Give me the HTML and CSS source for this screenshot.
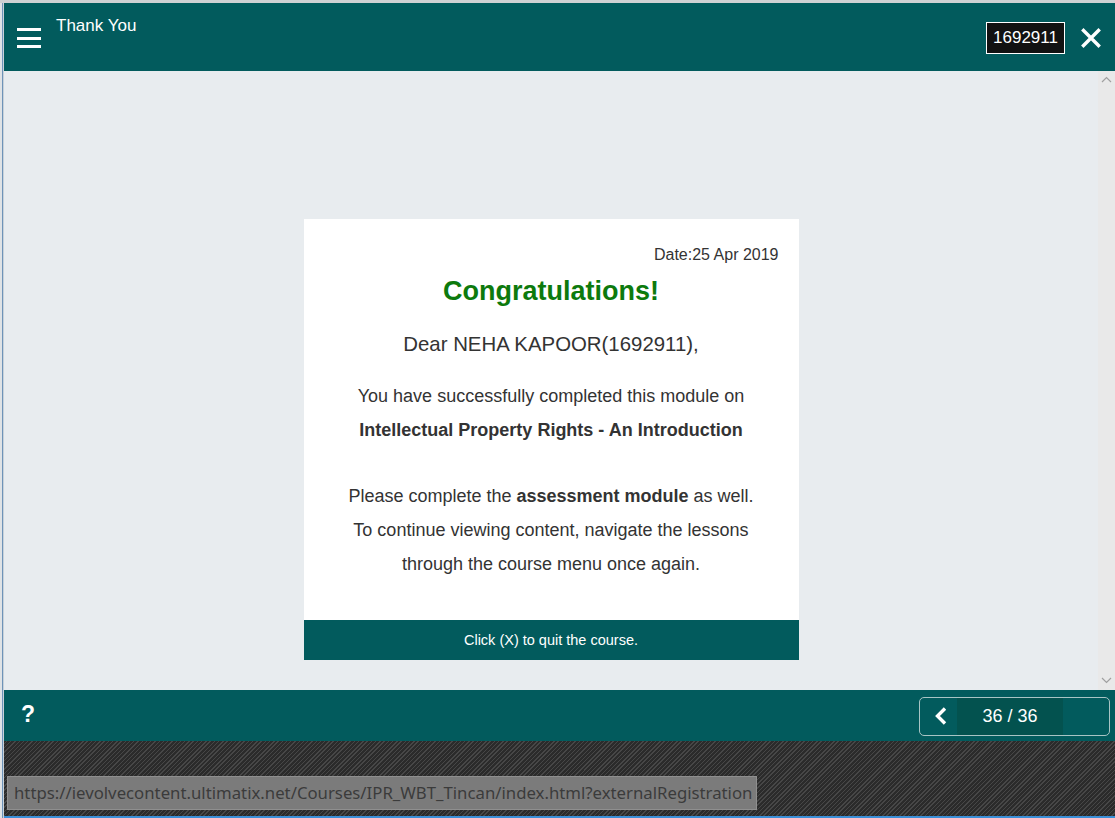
FILE: index.html
```html
<!DOCTYPE html>
<html>
<head>
<meta charset="utf-8">
<link rel="stylesheet" href="styles.css">
</head>
<body>
<div class="topline"></div>
<div class="frame">
  <div class="edge"></div>
  <div class="app">
    <header class="header">
      <div class="header-left">
        <button class="menu" aria-label="menu">
          <span></span><span></span><span></span>
        </button>
        <div class="title">Thank You</div>
      </div>
      <div class="header-right">
        <div class="userid">1692911</div>
        <svg class="close" width="20" height="20" viewBox="0 0 20 20">
          <path d="M2.5 2.5 L17.5 17.5 M17.5 2.5 L2.5 17.5" stroke="#fff" stroke-width="3.4" stroke-linecap="square"/>
        </svg>
      </div>
    </header>
    <main class="content">
      <div class="stage">
        <div class="card">
          <div class="card-body">
            <div class="date">Date:25 Apr 2019</div>
            <h1 class="congrats">Congratulations!</h1>
            <p class="dear">Dear NEHA KAPOOR(1692911),</p>
            <p class="msg">You have successfully completed this module on<br><b>Intellectual Property Rights - An Introduction</b></p>
            <p class="msg second">Please complete the <b>assessment module</b> as well.<br>To continue viewing content, navigate the lessons<br>through the course menu once again.</p>
          </div>
          <div class="card-foot">Click (X) to quit the course.</div>
        </div>
      </div>
      <div class="scrollbar">
        <svg width="11" height="7" viewBox="0 0 11 7"><path d="M1 6 L5.5 1.5 L10 6" fill="none" stroke="#a0a0a0" stroke-width="1.2"/></svg>
        <svg width="11" height="7" viewBox="0 0 11 7"><path d="M1 1 L5.5 5.5 L10 1" fill="none" stroke="#a0a0a0" stroke-width="1.2"/></svg>
      </div>
    </main>
    <footer class="footer">
      <div class="help">?</div>
      <div class="pager">
        <div class="pager-prev">
          <svg width="14" height="20" viewBox="0 0 14 20"><path d="M11 2.5 L3.5 10 L11 17.5" fill="none" stroke="#fff" stroke-width="3.4" stroke-linejoin="miter"/></svg>
        </div>
        <div class="pager-count">36 / 36</div>
        <div class="pager-next"></div>
      </div>
    </footer>
    <div class="backdrop">
      <div class="status">https://ievolvecontent.ultimatix.net/Courses/IPR_WBT_Tincan/index.html?externalRegistration</div>
    </div>
  </div>
</div>
</body>
</html>
```

FILE: styles.css
```css
* { box-sizing: border-box; }
html, body {
  margin: 0;
  padding: 0;
  width: 1115px;
  height: 818px;
  overflow: hidden;
  font-family: "Liberation Sans", Arial, sans-serif;
  background: #e8ecef;
}
.topline {
  height: 3px;
  background: #cfd1d3;
}
.frame {
  display: flex;
  height: 815px;
}
.edge {
  width: 4px;
  flex: none;
  background: linear-gradient(to right, #dfe3e6 0, #dfe3e6 2px, #6e93b8 2px, #6e93b8 3px, #c9d2d9 3px);
}
.app {
  flex: 1;
  display: flex;
  flex-direction: column;
}
.header {
  height: 68px;
  flex: none;
  background: #025b5d;
  display: flex;
  justify-content: space-between;
  align-items: flex-start;
}
.header-left {
  display: flex;
  align-items: flex-start;
}
.menu {
  margin: 23px 0 0 13px;
  border: 0;
  background: none;
  width: 24px;
  height: 24px;
  display: flex;
  flex-direction: column;
  justify-content: space-between;
  padding: 2px 0;
}
.menu span {
  display: block;
  height: 3px;
  background: #fff;
  width: 24px;
}
.title {
  color: #fff;
  font-size: 17px;
  margin: 13px 0 0 15px;
}
.header-right {
  display: flex;
  align-items: center;
  margin-top: 19px;
}
.userid {
  background: #121212;
  border: 1px solid #fff;
  color: #fff;
  font-size: 17px;
  height: 32px;
  line-height: 30px;
  padding: 0 4px;
  width: 79px;
  text-align: center;
}
.close {
  margin: 0 14px 0 16px;
}
.content {
  height: 619px;
  flex: none;
  display: flex;
  background: #e8ecef;
}
.stage {
  flex: 1;
  display: flex;
  justify-content: center;
  padding-top: 148px;
}
.card {
  width: 495px;
  height: 441px;
  display: flex;
  flex-direction: column;
  background: #fff;
}
.card-body {
  flex: 1;
  padding: 26px 20px 0;
  text-align: center;
  color: #333;
}
.date {
  text-align: right;
  font-size: 16px;
  line-height: 20px;
}
.congrats {
  margin: 9px 0 0;
  color: #0d7a0d;
  font-size: 27px;
  font-weight: bold;
  line-height: 34px;
}
.dear {
  margin: 19px 0 0;
  font-size: 20.4px;
  line-height: 34px;
}
.msg {
  margin: 18px 0 0;
  font-size: 18px;
  line-height: 34px;
}
.msg.second {
  margin-top: 32px;
}
.card-foot {
  height: 40px;
  flex: none;
  background: #025b5d;
  color: #fff;
  font-size: 14.5px;
  display: flex;
  align-items: center;
  justify-content: center;
}
.scrollbar {
  width: 17px;
  flex: none;
  background: #e9e9e9;
  display: flex;
  flex-direction: column;
  justify-content: space-between;
  align-items: center;
  padding: 5px 0 6px;
}
.footer {
  height: 51px;
  flex: none;
  background: #025b5d;
  display: flex;
  justify-content: space-between;
  align-items: center;
}
.help {
  color: #fff;
  font-size: 23px;
  font-weight: bold;
  margin-left: 17px;
  margin-top: -2px;
}
.pager {
  display: flex;
  height: 39px;
  width: 191px;
  border: 1px solid #a8c4c4;
  border-radius: 5px;
  margin-right: 5px;
  margin-top: 1px;
  overflow: hidden;
}
.pager-prev {
  width: 37px;
  display: flex;
  align-items: center;
  justify-content: center;
  padding-left: 4px;
}
.pager-count {
  width: 106px;
  background: #03524f;
  color: #fff;
  font-size: 18px;
  display: flex;
  align-items: center;
  justify-content: center;
}
.pager-next {
  flex: 1;
}
.backdrop {
  flex: 1;
  position: relative;
  background: repeating-linear-gradient(-45deg, #2b2b2b 0, #2b2b2b 2px, #474747 2px, #474747 3px);
  border-bottom: 2px solid #3a8fd8;
}
.status {
  position: absolute;
  left: 3px;
  top: 35px;
  width: 750px;
  height: 34px;
  background: #7b7b7b;
  border: 1px solid #8f8f8f;
  color: #3b3b3b;
  font-family: "Noto Sans", "Open Sans", sans-serif;
  font-size: 16.75px;
  line-height: 32px;
  padding-left: 6px;
  white-space: nowrap;
  overflow: hidden;
}
```
